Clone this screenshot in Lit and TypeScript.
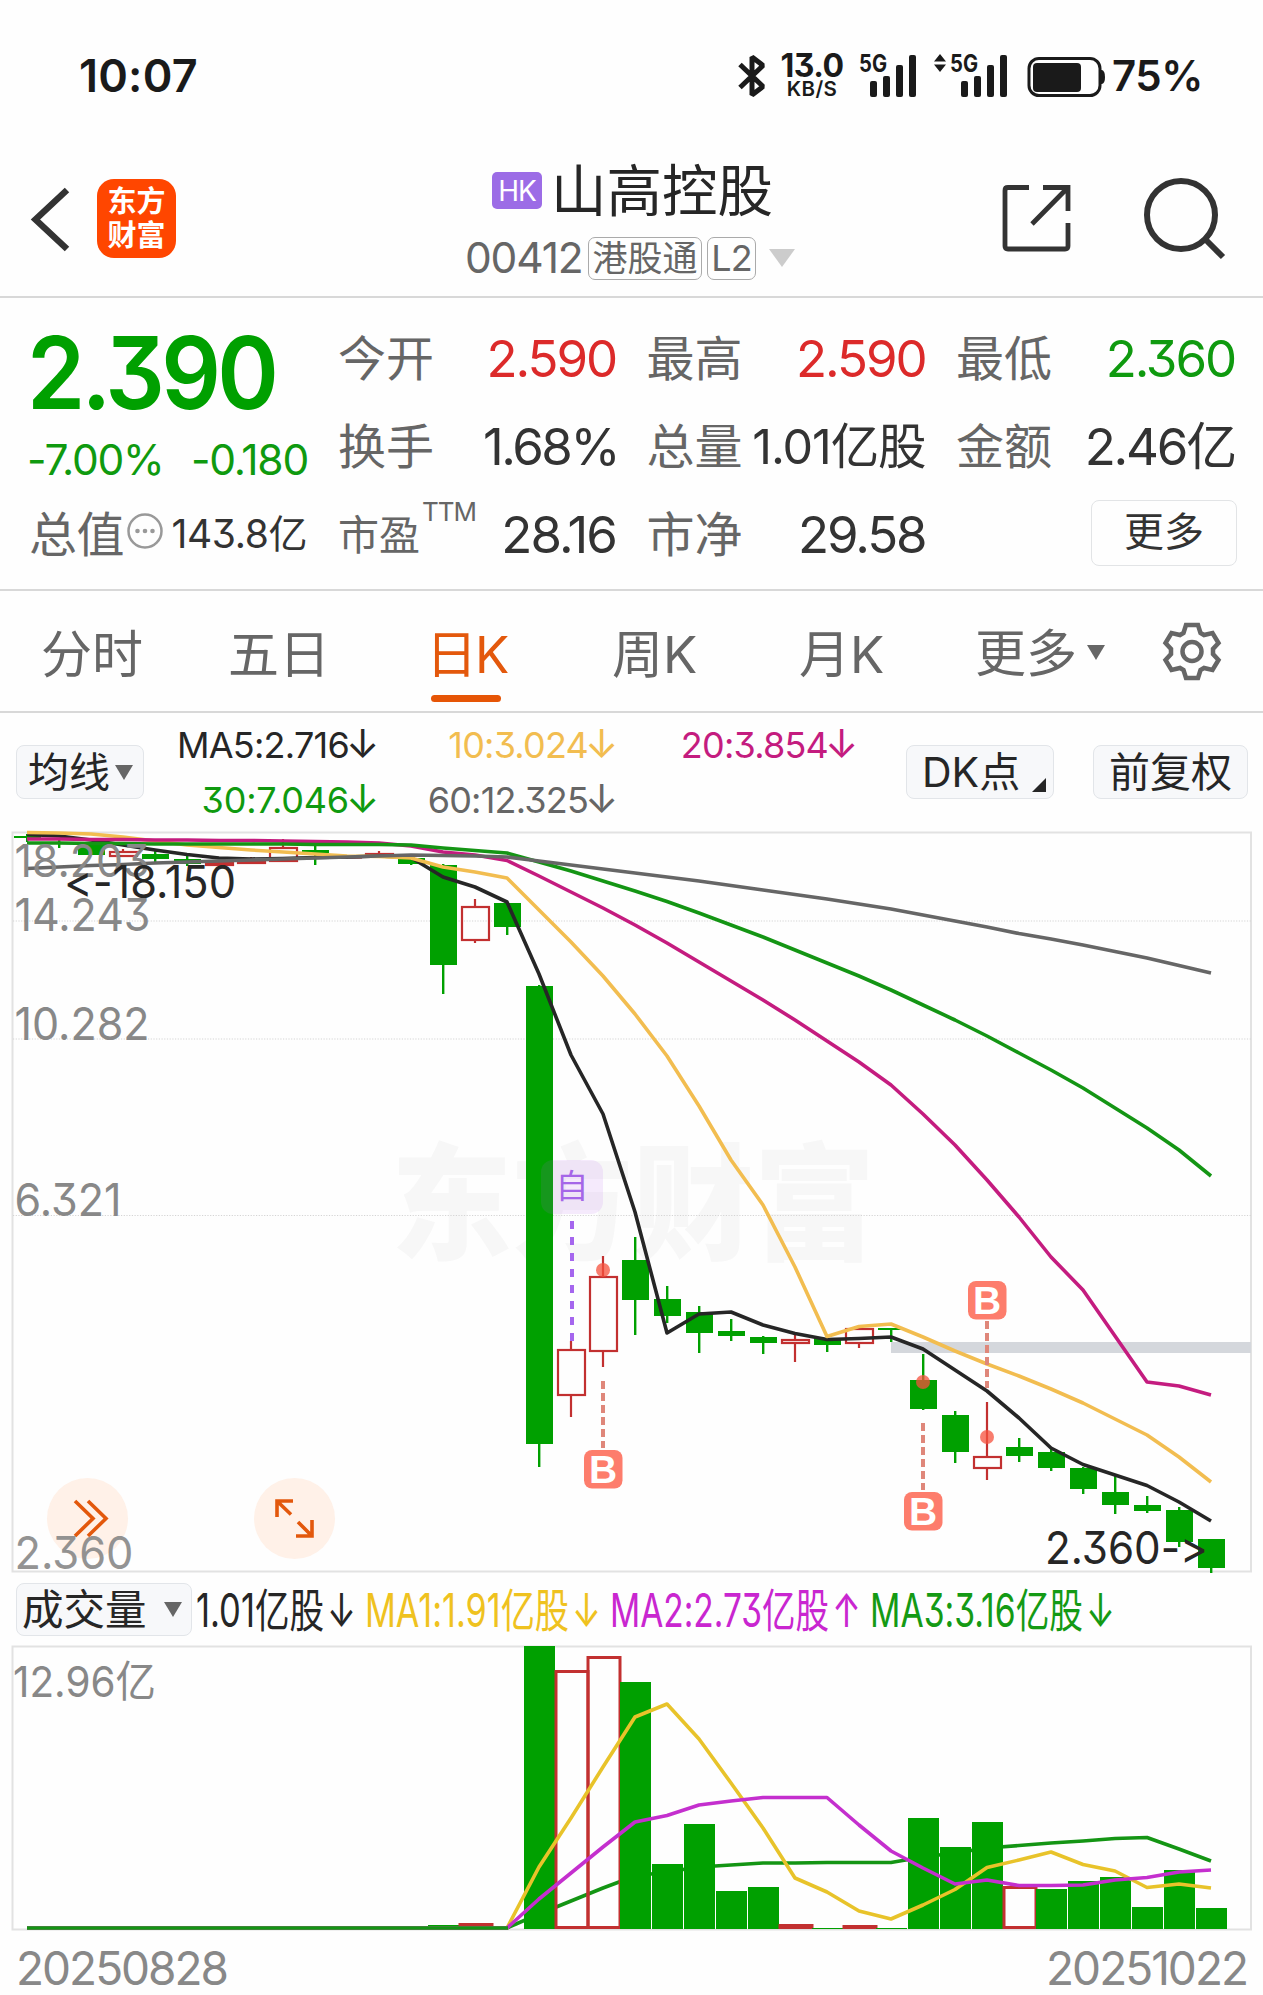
import { LitElement, html, svg, css } from "lit";
import { customElement } from "lit/decorators.js";

type Candle = [kind: "g" | "r", high: number, top: number, bottom: number, low: number];

const PITCH = 32;
const FIRST = 27;
const cx = (i: number) => FIRST + PITCH * i;

const candles: Candle[] = [
  ["g", 834, 836, 838, 842],
  ["g", 840, 842, 844, 848],
  ["g", 843, 845, 855, 855],
  ["r", 849, 851, 857, 857],
  ["g", 851, 854, 859, 862],
  ["g", 856, 859, 864, 866],
  ["r", 862, 862, 866, 866],
  ["r", 857, 860, 864, 864],
  ["r", 839, 847, 862, 862],
  ["g", 846, 850, 853, 865],
  ["r", 855, 856, 858, 859],
  ["r", 851, 853, 855, 855],
  ["g", 857, 858, 864, 865],
  ["g", 864, 865, 965, 994],
  ["r", 899, 906, 941, 943],
  ["g", 903, 903, 927, 935],
  ["g", 985, 986, 1444, 1467],
  ["r", 1341, 1349, 1396, 1417],
  ["r", 1256, 1276, 1352, 1367],
  ["g", 1237, 1260, 1300, 1335],
  ["g", 1286, 1299, 1316, 1323],
  ["g", 1306, 1312, 1333, 1353],
  ["g", 1319, 1331, 1336, 1341],
  ["g", 1336, 1337, 1343, 1354],
  ["r", 1334, 1339, 1344, 1362],
  ["g", 1338, 1338, 1345, 1352],
  ["r", 1328, 1328, 1344, 1348],
  ["g", 1328, 1328, 1330, 1342],
  ["g", 1354, 1380, 1409, 1410],
  ["g", 1411, 1415, 1452, 1463],
  ["r", 1402, 1456, 1469, 1480],
  ["g", 1438, 1447, 1456, 1462],
  ["g", 1448, 1452, 1468, 1471],
  ["g", 1467, 1468, 1489, 1494],
  ["g", 1476, 1492, 1505, 1514],
  ["g", 1496, 1505, 1511, 1513],
  ["g", 1507, 1510, 1542, 1547],
  ["g", 1539, 1539, 1568, 1573],
];

const ma60 = [868.5, 867, 865.5, 864.5, 863, 862, 861, 860, 859, 858, 857, 856, 855, 855.5, 856, 857, 861, 865, 869, 873, 877, 881, 885.5, 890, 894.5, 899, 904, 909, 915, 921, 927, 933.5, 939, 945, 951.5, 958, 965.5, 973];
const ma30 = [843, 843, 843.5, 843.5, 844, 844, 844, 844, 844, 844.5, 844.5, 844.5, 845, 848, 850.5, 853, 862, 871, 881, 891, 901.5, 913, 925, 937, 950, 963, 976, 990, 1005, 1020, 1036, 1053, 1070, 1088, 1108, 1128, 1150, 1176];
const ma20 = [839, 839, 839.5, 839.5, 840, 840, 840.5, 840.5, 841, 841.5, 842, 843, 846, 852, 855, 860.5, 876, 892, 908, 925, 943, 962, 981, 1000, 1020, 1041, 1062, 1085, 1114, 1145, 1180, 1217, 1257, 1290, 1336, 1382, 1386, 1395];
const ma10 = [832.5, 833, 834, 837, 841, 845, 847.5, 850, 852, 854, 856, 856.5, 858, 867, 872, 878, 910, 942, 976, 1014, 1056, 1106, 1160, 1205, 1267, 1336.5, 1326.5, 1324, 1337, 1351, 1364, 1376, 1389, 1403, 1419, 1435, 1457, 1482];
const ma5 = [834.5, 836, 840, 845, 850, 854.5, 858, 859, 858.5, 857.5, 857, 856, 857.5, 877, 887, 902, 974, 1055, 1114, 1212, 1333, 1314, 1312, 1325, 1333.5, 1339.5, 1338.5, 1337, 1349, 1370, 1391, 1418, 1448, 1464.5, 1475, 1485.5, 1502, 1521];

const VOLUME_BASE = 1929;
const volumes: Array<[index: number, kind: "g" | "r", top: number]> = [
  [13, "g", 1925], [14, "r", 1923],
  [16, "g", 1646], [17, "r", 1670], [18, "r", 1656], [19, "g", 1682], [20, "g", 1864],
  [21, "g", 1824], [22, "g", 1891], [23, "g", 1887], [24, "r", 1924], [25, "g", 1928],
  [26, "r", 1925], [27, "g", 1928], [28, "g", 1818], [29, "g", 1847], [30, "g", 1822],
  [31, "r", 1886], [32, "g", 1889], [33, "g", 1881], [34, "g", 1877], [35, "g", 1907],
  [36, "g", 1870], [37, "g", 1908],
];
const flat = (y: number, n = 16) => Array.from({ length: n }, () => y);
const vol1 = [...flat(1928), 1867, 1818, 1767, 1717, 1704, 1739, 1783, 1828, 1878, 1892, 1911, 1919, 1905, 1889.5, 1867.5, 1860, 1852, 1864.5, 1871, 1887.5, 1884, 1888];
const vol2 = [...flat(1928), 1899, 1873, 1847, 1822, 1815.5, 1805, 1801, 1797.5, 1797.5, 1797.5, 1825, 1851, 1868, 1884, 1880, 1885.5, 1885.5, 1885, 1880, 1877.5, 1872, 1870];
const vol3 = [...flat(1928), 1914, 1901, 1888, 1876, 1872, 1867, 1865, 1863, 1863, 1862.5, 1862.5, 1862.5, 1857, 1853, 1848, 1845.5, 1843, 1841, 1838.5, 1837.5, 1849, 1861];

const points = (ys: number[]) => ys.map((y, i) => `${cx(i)},${y}`).join(" ");

const sharedText = css`
  :host {
    display: block;
    font-family: Inter, "Noto Sans CJK SC", sans-serif;
    font-feature-settings: "cv09", "calt" 0;
  }
  svg {
    display: block;
    overflow: visible;
  }
`;

@customElement("status-bar")
class StatusBar extends LitElement {
  static styles = [
    sharedText,
    css`
      .bar {
        display: flex;
        align-items: flex-start;
        height: 66px;
        padding: 54px 0 0 79px;
        color: #1a1a1a;
        white-space: nowrap;
      }
      .time {
        width: 659px;
        font-size: 45px;
        line-height: 44px;
        font-weight: 600;
        letter-spacing: 0.2px;
      }
      .speed {
        display: flex;
        flex-direction: column;
        align-items: center;
        width: 66px;
        margin-left: 13px;
        font-weight: 700;
      }
      .rate {
        font-size: 32px;
        line-height: 24px;
        letter-spacing: -0.5px;
      }
      .unit {
        font-size: 20.500px;
        line-height: 21px;
        font-weight: 600;
        letter-spacing: 0.4px;
      }
      .signal {
        margin-left: 13px;
      }
      .second {
        margin-left: 18px;
      }
      .battery {
        margin: 2px 0 0 20px;
      }
      .level {
        margin-left: 5px;
        font-size: 42px;
        line-height: 44px;
        font-weight: 600;
        letter-spacing: -0.5px;
      }
      .g {
        font: 700 24px Inter, sans-serif;
      }
    `,
  ];

  private bars(x: number) {
    return svg`
      <rect x=${x} y="27" width="7" height="16" rx="2"></rect>
      <rect x=${x + 13} y="22" width="7" height="21" rx="2"></rect>
      <rect x=${x + 26} y="11" width="7" height="32" rx="2"></rect>
      <rect x=${x + 39} y="1" width="7" height="42" rx="2"></rect>`;
  }

  render() {
    return html`<div class="bar">
      <span class="time">10:07</span>
      <svg width="28" height="44" viewBox="0 0 28 44" fill="none" stroke="#1a1a1a" stroke-width="5">
        <path d="M2 10.500L25 32.500L14 41V3L25 11.500L2 33.500" stroke-linejoin="bevel"></path>
      </svg>
      <div class="speed"><span class="rate">13.0</span><span class="unit">KB/S</span></div>
      <svg class="signal" width="58" height="44" fill="#1a1a1a">
        <text class="g" x="1" y="18" textLength="28" lengthAdjust="spacingAndGlyphs">5G</text>
        ${this.bars(12)}
      </svg>
      <svg class="second" width="73" height="44" fill="#1a1a1a">
        <path d="M0 7.500L6 0L12 7.500ZM0 10.500H12L6 18Z"></path>
        <text class="g" x="16" y="18" textLength="28" lengthAdjust="spacingAndGlyphs">5G</text>
        ${this.bars(27)}
      </svg>
      <svg class="battery" width="80" height="42" fill="#1a1a1a">
        <rect x="2" y="2.500" width="71" height="37" rx="10" fill="none" stroke="#1a1a1a" stroke-width="3"></rect>
        <rect x="6" y="7" width="48" height="29" rx="4"></rect>
        <path d="M73 14H75Q78 15 78 21T75 28H73Z"></path>
      </svg>
      <span class="level">75%</span>
    </div>`;
  }
}

@customElement("stock-header")
class StockHeader extends LitElement {
  static styles = [
    sharedText,
    css`
      .header {
        display: flex;
        height: 176px;
        border-bottom: 2px solid #d8d8d8;
      }
      .left {
        display: flex;
        align-items: center;
        width: 466px;
        height: 155px;
        margin-top: 21px;
      }
      .back {
        margin-left: 29px;
      }
      .logo {
        display: flex;
        flex-direction: column;
        align-items: center;
        box-sizing: border-box;
        width: 79px;
        height: 79px;
        margin-left: 25px;
        padding-top: 3px;
        border-radius: 17px;
        background: #ff4600;
        color: #fff;
        font-family: "Noto Sans CJK SC", sans-serif;
        font-weight: 700;
        font-size: 29px;
        line-height: 34px;
      }
      .title {
        display: flex;
        flex-direction: column;
        width: 520px;
      }
      .name {
        display: flex;
        align-items: center;
        gap: 9px;
        height: 68px;
        margin: 37px 0 0 26px;
        font-size: 55.500px;
        line-height: 68px;
        color: #262626;
      }
      .hk {
        width: 50px;
        height: 37px;
        margin-top: -2px;
        border-radius: 5px;
        background: #9c6ce6;
        color: #fff;
        font-size: 28px;
        line-height: 38px;
        text-align: center;
        letter-spacing: -1px;
      }
      .code {
        display: flex;
        align-items: center;
        height: 44px;
        margin-top: 11px;
        color: #666;
        font-size: 42.500px;
        line-height: 44px;
      }
      .digits {
        width: 123px;
        margin-left: -1px;
        letter-spacing: -1.2px;
      }
      .tag {
        box-sizing: border-box;
        height: 43px;
        width: 114px;
        text-align: center;
        border: 1.500px solid #aaa;
        border-radius: 7px;
        font-size: 35px;
        line-height: 41px;
      }
      .l2 {
        width: 49px;
        margin-left: 5px;
        font-size: 36px;
        letter-spacing: -1px;
      }
      .more {
        margin-left: 13px;
      }
      .share {
        margin: 62px 0 0 14px;
      }
      .search {
        margin: 57px 0 0 73px;
      }
    `,
  ];

  render() {
    return html`<div class="header">
      <div class="left">
        <svg class="back" width="43" height="72" fill="none" stroke="#333" stroke-width="6.500">
          <path d="M38 7L6.500 36.500L38 66"></path>
        </svg>
        <div class="logo"><span>东方</span><span>财富</span></div>
      </div>
      <div class="title">
        <div class="name"><span class="hk">HK</span><span>山高控股</span></div>
        <div class="code">
          <span class="digits">00412</span><span class="tag">港股通</span><span class="tag l2">L2</span>
          <svg class="more" width="26" height="18"><path d="M0 0H26L13 18Z" fill="#ccc"></path></svg>
        </div>
      </div>
      <svg class="share" width="72" height="72" fill="none" stroke="#333" stroke-width="4.800">
        <path d="M29 5.500H8Q5 5.500 5 8.500V64Q5 67 8 67H65Q68 67 68 64V41M43 5.500H68V29M32 42L67 6.500"></path>
      </svg>
      <svg class="search" width="84" height="84" fill="none" stroke="#333" stroke-width="6">
        <circle cx="36" cy="38" r="34"></circle>
        <path d="M60 62L78 80"></path>
      </svg>
    </div>`;
  }
}

@customElement("quote-panel")
class QuotePanel extends LitElement {
  static styles = [
    sharedText,
    css`
      .panel {
        display: flex;
        height: 291px;
        border-bottom: 2px solid #d8d8d8;
        white-space: nowrap;
      }
      .left {
        width: 309px;
        padding-left: 29px;
        color: #0f9a0f;
      }
      .price {
        height: 112px;
        margin: 19px 0 0 -2px;
        color: #00a000;
        font-size: 100px;
        line-height: 112px;
        font-weight: 600;
        letter-spacing: -4px;
        transform: scaleX(0.935);
        transform-origin: left;
      }
      .change {
        display: flex;
        justify-content: space-between;
        width: 281px;
        height: 60px;
        margin: 1px 0 0 -2px;
        font-size: 42.500px;
        line-height: 60px;
        letter-spacing: -1.200px;
      }
      .cap {
        display: flex;
        align-items: center;
        justify-content: space-between;
        width: 278px;
        height: 60px;
        margin-top: 11px;
        color: #333;
        font-size: 39px;
        letter-spacing: -0.400px;
      }
      .dots {
        margin: 4px 0 0 -1px;
      }
      .grid {
        display: grid;
        grid-template-columns: 278px 279px 279px;
        grid-auto-rows: 88px;
        column-gap: 30.500px;
        margin-top: 16.500px;
      }
      .cell {
        display: flex;
        align-items: center;
        justify-content: space-between;
        font-size: 51px;
        line-height: 60px;
        color: #333;
        letter-spacing: -2.100px;
      }
      .label {
        font-size: 48px;
        color: #666;
        letter-spacing: 0;
      }
      .cap .label {
        letter-spacing: -0.5px;
      }
      .small {
        font-size: 41px;
      }
      .ttm {
        align-self: flex-start;
        margin: 8px auto 0 2px;
        font-size: 26px;
        line-height: 26px;
        color: #666;
        letter-spacing: -1px;
      }
      .up {
        color: #dc2a2a;
      }
      .down {
        color: #0f9a0f;
      }
      .rate {
        margin-right: -2px;
        letter-spacing: -2.500px;
      }
      .ratio {
        letter-spacing: -1.900px;
      }
      .amount {
        letter-spacing: -2.200px;
      }
      .volume {
        font-size: 48.500px;
        letter-spacing: -1.100px;
      }
      .button {
        box-sizing: border-box;
        width: 146px;
        height: 66px;
        margin: -4px -2px 0 auto;
        border: 1.500px solid #e2e4e6;
        border-radius: 8px;
        font-size: 40px;
        line-height: 62px;
        letter-spacing: 0;
        text-align: center;
      }
    `,
  ];

  render() {
    return html`<div class="panel">
      <div class="left">
        <div class="price">2.390</div>
        <div class="change"><span>-7.00%</span><span>-0.180</span></div>
        <div class="cap">
          <span class="label">总值</span>
          <svg class="dots" width="36" height="38">
            <circle cx="16" cy="17" r="16.500" fill="none" stroke="#999" stroke-width="2.500"></circle>
            <g fill="#999"><circle cx="8.500" cy="17" r="2.300"></circle><circle cx="16" cy="17" r="2.300"></circle><circle cx="23.500" cy="17" r="2.300"></circle></g>
          </svg>
          <span>143.8亿</span>
        </div>
      </div>
      <div class="grid">
        <div class="cell"><span class="label">今开</span><span class="up">2.590</span></div>
        <div class="cell"><span class="label">最高</span><span class="up">2.590</span></div>
        <div class="cell"><span class="label">最低</span><span class="down">2.360</span></div>
        <div class="cell"><span class="label">换手</span><span class="rate">1.68%</span></div>
        <div class="cell"><span class="label">总量</span><span class="volume">1.01亿股</span></div>
        <div class="cell"><span class="label">金额</span><span class="amount">2.46亿</span></div>
        <div class="cell"><span class="label small">市盈</span><span class="ttm">TTM</span><span class="ratio">28.16</span></div>
        <div class="cell"><span class="label">市净</span><span>29.58</span></div>
        <div class="cell"><span class="button">更多</span></div>
      </div>
    </div>`;
  }
}

@customElement("period-tabs")
class PeriodTabs extends LitElement {
  static styles = [
    sharedText,
    css`
      .tabs {
        display: flex;
        height: 120px;
        padding-left: 41px;
        border-bottom: 2px solid #d8d8d8;
        color: #666;
        font-size: 51px;
        line-height: 128px;
        white-space: nowrap;
      }
      .tab {
        width: 187px;
      }
      .wide {
        width: 198px;
      }
      .active {
        display: flex;
        flex-direction: column;
        width: 186px;
        color: #e3580c;
        letter-spacing: -2px;
      }
      .active span {
        height: 104px;
      }
      .underline {
        width: 70px;
        height: 7px;
        margin-left: 5px;
        border-radius: 4px;
        background: #e65506;
      }
      .k4 {
        width: 176px;
      }
      .more {
        display: flex;
        align-items: center;
        width: 188px;
        height: 126px;
      }
      .arrow {
        margin-left: 10px;
      }
    `,
  ];

  render() {
    return html`<div class="tabs">
      <span class="tab">分时</span>
      <span class="wide">五日</span>
      <div class="active"><span>日K</span><i class="underline"></i></div>
      <span class="tab">周K</span>
      <span class="k4">月K</span>
      <span class="more">更多<svg class="arrow" width="18" height="19"><path d="M0 0H18L9 15Z" fill="#666"></path></svg></span>
      <svg width="58" height="122" viewBox="-29 -60.500 58 122" fill="none" stroke="#666" stroke-width="4.500">
        <path d="M-6 -26.500H6L8.500 -18.500L12 -16.500L20.500 -18.500L26.500 -8.500L21 -2.500V2.500L26.500 8.500L20.500 18.500L12 16.500L8.500 18.500L6 26.500H-6L-8.500 18.500L-12 16.500L-20.500 18.500L-26.500 8.500L-21 2.500V-2.500L-26.500 -8.500L-20.500 -18.500L-12 -16.500L-8.500 -18.500Z"></path>
        <circle r="9.500"></circle>
      </svg>
    </div>`;
  }
}

@customElement("average-row")
class AverageRow extends LitElement {
  static styles = [
    sharedText,
    css`
      .row {
        display: flex;
        height: 118px;
        white-space: nowrap;
      }
      .chip {
        box-sizing: border-box;
        display: flex;
        align-items: center;
        height: 54px;
        margin-top: 32px;
        border: 1.500px solid #e2e5e9;
        border-radius: 8px;
        background: #f7f8fa;
        color: #262626;
        font-size: 41px;
        line-height: 51px;
      }
      .line {
        width: 128px;
        margin-left: 16px;
        padding-left: 11px;
        gap: 5px;
      }
      .grid {
        display: grid;
        grid-template-columns: 233px 239px 240px;
        grid-auto-rows: 55px;
        width: 712px;
        margin-top: 5px;
        text-align: right;
        font-size: 36px;
        line-height: 55px;
        letter-spacing: -0.800px;
      }
      .arrow {
        display: inline-block;
        width: 25px;
        margin-left: 3px;
        font-size: 40px;
        line-height: 0;
        font-style: normal;
        text-align: left;
        text-indent: -6px;
      }
      .black {
        color: #262626;
        letter-spacing: -0.750px;
      }
      .yellow {
        color: #f2bd50;
      }
      .pink {
        color: #c41c7f;
      }
      .green {
        color: #0f9a0f;
        letter-spacing: -0.200px;
      }
      .grey {
        color: #666;
      }
      .dk {
        width: 148px;
        margin-left: 50px;
        padding-left: 15px;
      }
      .corner {
        align-self: flex-end;
        margin: 0 7px 6px auto;
      }
      .right {
        width: 155px;
        margin-left: 39px;
        justify-content: center;
      }
    `,
  ];

  render() {
    const arrow = html`<i class="arrow">↓</i>`;
    return html`<div class="row">
      <div class="chip line">均线<svg width="18" height="15"><path d="M0 0H18L9 15Z" fill="#666"></path></svg></div>
      <div class="grid">
        <span class="black">MA5:2.716${arrow}</span>
        <span class="yellow">10:3.024${arrow}</span>
        <span class="pink">20:3.854${arrow}</span>
        <span class="green">30:7.046${arrow}</span>
        <span class="grey">60:12.325${arrow}</span>
      </div>
      <div class="chip dk">DK点<svg class="corner" width="14" height="14"><path d="M14 0V14H0Z" fill="#262626"></path></svg></div>
      <div class="chip right">前复权</div>
    </div>`;
  }
}

@customElement("price-chart")
class PriceChart extends LitElement {
  static styles = [
    sharedText,
    css`
      .axis {
        font-size: 45px;
        fill: #888;
      }
      .note {
        font-size: 45px;
        fill: #262626;
      }
      .watermark {
        font: 900 126px "Noto Sans CJK SC", sans-serif;
        fill: #f7f7f7;
      }
      .flag {
        font: 700 39px "Liberation Sans", sans-serif;
        fill: #fff;
        text-anchor: middle;
      }
      .own {
        font: 33px "Noto Sans CJK SC", sans-serif;
        fill: #a566e8;
        text-anchor: middle;
      }
      .ma {
        fill: none;
        stroke-width: 3.600;
        stroke-linejoin: round;
      }
    `,
  ];

  private candle([kind, high, top, bottom, low]: Candle, i: number) {
    const x = cx(i);
    if (kind === "g") {
      return svg`<g fill="#00a000">
        <rect x=${x - 1} y=${high} width="2.400" height=${low - high}></rect>
        <rect x=${x - 13} y=${top} width="27" height=${bottom - top}></rect></g>`;
    }
    return svg`<g stroke="#c23030" stroke-width="2.200" fill="none">
      <path d="M${x} ${high}V${top}M${x} ${bottom}V${low}"></path>
      <rect x=${x - 13} y=${top + 1} width="27" height=${Math.max(bottom - top - 2, 0.5)}></rect></g>`;
  }

  private flag(x: number, y: number) {
    return svg`<rect x=${x - 19} y=${y - 19} width="38.500" height="38.500" rx="8" fill="#fd7d6c"></rect>
      <text class="flag" x=${x} y=${y + 13.5}>B</text>`;
  }

  private axis(label: string, y: number, width: number) {
    return svg`<text class="axis" x="14.500" y=${y} textLength=${width} lengthAdjust="spacingAndGlyphs">${label}</text>`;
  }

  render() {
    return html`<svg width="1263" height="742" viewBox="0 831 1263 742">
      <text class="watermark" x="391" y="1250" textLength="484" lengthAdjust="spacingAndGlyphs">东方财富</text>
      <rect x="12.500" y="832.500" width="1238.500" height="739" fill="none" stroke="#e2e2e2" stroke-width="2"></rect>
      <path d="M13 921H1251M13 1039H1251M13 1215.500H1251" stroke="#d4d4d4" stroke-width="1.200" stroke-dasharray="1.200 1.500"></path>
      <rect x="891" y="1342" width="360" height="11" fill="#d4d7dc"></rect>
      ${candles.map((c, i) => this.candle(c, i))}
      <polyline class="ma" stroke="#262626" points=${points(ma5)}></polyline>
      <polyline class="ma" stroke="#f2bd50" points=${points(ma10)}></polyline>
      <polyline class="ma" stroke="#c41c7f" points=${points(ma20)}></polyline>
      <polyline class="ma" stroke="#149514" points=${points(ma30)}></polyline>
      <polyline class="ma" stroke="#666" points=${points(ma60)}></polyline>
      <g fill="#f5503c" fill-opacity=".75">
        <circle cx="603" cy="1270" r="7"></circle><circle cx="923" cy="1382" r="7"></circle><circle cx="987" cy="1437" r="7"></circle>
      </g>
      <path d="M603 1381V1448M923 1423V1490M987 1321V1388" stroke="#df877a" stroke-width="4" stroke-dasharray="8 4"></path>
      ${this.flag(603, 1469)}${this.flag(923, 1511)}${this.flag(987, 1300)}
      <path d="M572 1221V1341" stroke="#a566ee" stroke-width="4" stroke-dasharray="8 8"></path>
      <rect x="541" y="1160" width="62" height="54" rx="12" fill="#b45af0" fill-opacity=".12"></rect>
      <text class="own" x="572" y="1198">自</text>
      <circle cx="87.500" cy="1518.500" r="40.500" fill="#fff1e8"></circle>
      <circle cx="294.500" cy="1518.500" r="40.500" fill="#fff1e8"></circle>
      <g fill="none" stroke="#e3580c" stroke-width="3.600">
        <path d="M75 1501L93 1518.500L75 1536M88 1501L106 1518.500L88 1536"></path>
        <path d="M293 1501H277V1517M277 1501L291 1514.500M296 1536H312V1520M312 1536L298 1522"></path>
      </g>
      ${this.axis("18.203", 877, 135)} ${this.axis("14.243", 931, 136)}
      ${this.axis("10.282", 1040, 135)} ${this.axis("6.321", 1216, 107)}
      <g opacity=".9">${this.axis("2.360", 1569, 119)}</g>
      <text class="note" x="64" y="898" textLength="172" lengthAdjust="spacingAndGlyphs">&lt;-18.150</text>
      <text class="note" x="1045" y="1564" textLength="163" lengthAdjust="spacingAndGlyphs">2.360-&gt;</text>
    </svg>`;
  }
}

@customElement("volume-chart")
class VolumeChart extends LitElement {
  static styles = [
    sharedText,
    css`
      .row {
        display: flex;
        height: 72px;
      }
      .chip {
        box-sizing: border-box;
        display: flex;
        align-items: center;
        gap: 17px;
        width: 176px;
        height: 53px;
        margin: 10px 0 0 16px;
        padding-left: 5px;
        border: 1.500px solid #e2e5e9;
        border-radius: 8px;
        background: #f7f8fa;
        color: #262626;
        font-size: 41.500px;
        line-height: 52px;
        white-space: nowrap;
      }
      .legend {
        font-size: 46px;
      }
      .arrow {
        font-size: 47px;
      }
      .axis {
        font-size: 43px;
        fill: #888;
      }
      .ma {
        fill: none;
        stroke-width: 3.600;
        stroke-linejoin: round;
      }
      .dates {
        display: flex;
        justify-content: space-between;
        height: 58px;
        padding: 6px 16px 0 16px;
        color: #888;
        font-size: 46px;
        line-height: 62px;
        letter-spacing: -2px;
      }
    `,
  ];

  private legend(x: number, width: number, color: string, text: string, arrow: string) {
    return svg`<text x=${x} y="53.500" fill=${color} textLength=${width} lengthAdjust="spacingAndGlyphs">${text}</text>
      <text class="arrow" x=${x + width + 3} y="53.500" fill=${color} textLength="29" lengthAdjust="spacingAndGlyphs">${arrow}</text>`;
  }

  private bar([i, kind, top]: [number, "g" | "r", number]) {
    const x = cx(i);
    if (kind === "g") {
      return svg`<rect x=${x - 15} y=${top} width="31" height=${VOLUME_BASE - top} fill="#00a000"></rect>`;
    }
    return svg`<rect x=${x - 15} y=${top + 1.5} width="32" height=${Math.max(VOLUME_BASE - top - 3, 1)} fill="none" stroke="#c23030" stroke-width="3"></rect>`;
  }

  render() {
    return html`<div class="row">
        <div class="chip">成交量<svg width="18" height="15"><path d="M0 0H18L9 15Z" fill="#666"></path></svg></div>
        <svg class="legend" width="1071" height="72" viewBox="192 0 1071 72">
          ${this.legend(196, 128, "#262626", "1.01亿股", "↓")}
          ${this.legend(365, 204, "#efc21f", "MA1:1.91亿股", "↓")}
          ${this.legend(610, 219, "#c926d0", "MA2:2.73亿股", "↑")}
          ${this.legend(870, 213, "#149a14", "MA3:3.16亿股", "↓")}
        </svg>
      </div>
      <svg width="1263" height="286" viewBox="0 1645 1263 286">
        <rect x="12.500" y="1646.500" width="1238.500" height="283" fill="none" stroke="#e2e2e2" stroke-width="2"></rect>
        <polyline class="ma" stroke="#149514" points=${points(vol3)}></polyline>
        ${volumes.map((v) => this.bar(v))}
        <polyline class="ma" stroke="#e8c32a" points=${points(vol1)}></polyline>
        <polyline class="ma" stroke="#c42fce" points=${points(vol2)}></polyline>
        <path d="M27 1928H508" stroke="#149514" stroke-width="3.400"></path>
        <text class="axis" x="13" y="1697" textLength="143" lengthAdjust="spacingAndGlyphs">12.96亿</text>
      </svg>
      <div class="dates"><span>20250828</span><span>20251022</span></div>`;
  }
}

@customElement("app-root")
class AppRoot extends LitElement {
  static styles = css`
    :host {
      display: block;
      width: 1263px;
      height: 1995px;
      overflow: hidden;
      background: #fefefe;
    }
  `;

  render() {
    return html`<status-bar></status-bar>
      <stock-header></stock-header>
      <quote-panel></quote-panel>
      <period-tabs></period-tabs>
      <average-row></average-row>
      <price-chart></price-chart>
      <volume-chart></volume-chart>`;
  }
}
